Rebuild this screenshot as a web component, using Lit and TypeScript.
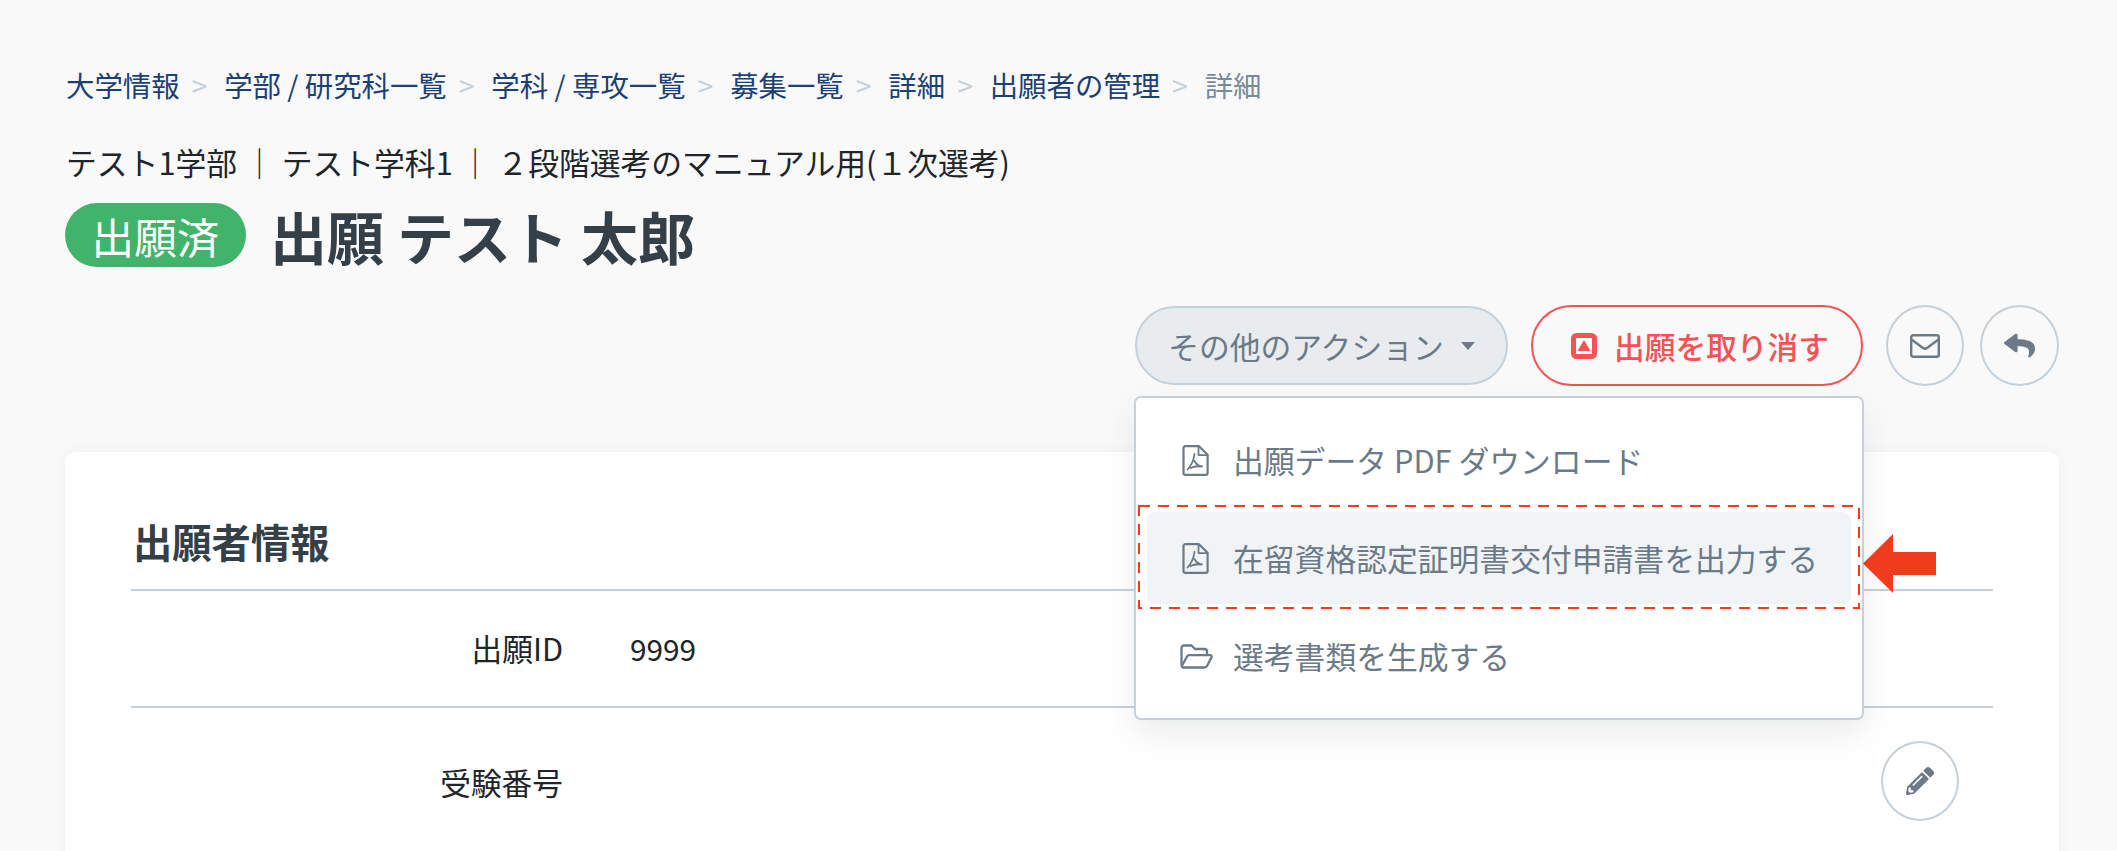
import { LitElement, html, css, svg } from "lit";
import { customElement } from "lit/decorators.js";

const crumbs = ["大学情報", "学部 / 研究科一覧", "学科 / 専攻一覧", "募集一覧", "詳細", "出願者の管理"];

const pdfIcon = svg`
  <svg class="ic-pdf" viewBox="0 0 27 31" fill="none" stroke="currentColor" stroke-width="2.2" stroke-linejoin="round" stroke-linecap="round">
    <path d="M1.5 3a1.8 1.8 0 0 1 1.8-1.8H17l8.600 8.600V28a1.800 1.800 0 0 1-1.800 1.800H3.300A1.800 1.800 0 0 1 1.500 28z"/>
    <path d="M16.500 1.500v8.600h9" stroke-width="1.800"/>
    <path d="M12.500 9c-.6 5-2.800 11-7 15.500M12.500 16c1.500 3 3.500 5 7.500 5.500-4-.5-8.500 0-11.500 1.500" stroke-width="1.800"/>
  </svg>`;

const folderIcon = svg`
  <svg class="ic-folder" viewBox="0 0 33 25" fill="none" stroke="currentColor" stroke-width="2.300" stroke-linejoin="round" stroke-linecap="round">
    <path d="M1.500 21V4a2.500 2.500 0 0 1 2.500-2.500h7.500l3.500 3.500h9.500a2.500 2.500 0 0 1 2.500 2.500V11"/>
    <path d="M1.800 22 7 12.500a2.500 2.500 0 0 1 2.200-1.300h21a1.500 1.500 0 0 1 1.300 2.200L27 22a3 3 0 0 1-2.500 1.500H3a1.500 1.500 0 0 1-1.200-1.500z"/>
  </svg>`;

@customElement("app-root")
export class AppRoot extends LitElement {
  render() {
    return html`
      <nav class="crumbs">
        ${crumbs.map((c) => html`<a>${c}</a><span class="sep">&gt;</span>`)}
        <span class="current">詳細</span>
      </nav>
      <div class="sub">テスト1学部 ｜ テスト学科1 ｜ ２段階選考のマニュアル用(１次選考)</div>
      <div class="title-row">
        <span class="badge">出願済</span>
        <h1>出願 テスト 太郎</h1>
      </div>

      <div class="actions">
        <div class="more-wrap">
          <button class="more">
            その他のアクション<i class="caret"></i>
          </button>
        </div>
        <div class="cancel-wrap">
          <button class="cancel">
            <svg class="ic-cancel" viewBox="0 0 26 26">
              <rect x="2.500" y="2.500" width="21" height="21" rx="3" fill="#fff" stroke="currentColor" stroke-width="5"></rect>
              <path d="M13 7 19.500 18h-13z" fill="currentColor"></path>
            </svg>
            出願を取り消す
          </button>
          <div class="menu">
            <div class="item">${pdfIcon}<span>出願データ PDF ダウンロード</span></div>
            <div class="item active">${pdfIcon}<span>在留資格認定証明書交付申請書を出力する</span></div>
            <div class="item">${folderIcon}<span>選考書類を生成する</span></div>
            <svg class="dashed" viewBox="0 0 722 104">
              <rect x="1" y="1" width="720" height="102" fill="none" stroke="#f03b1c" stroke-width="2" stroke-dasharray="11 8"></rect>
            </svg>
            <svg class="arrow" viewBox="0 0 73 59"><path d="M0 29.500 30 0v18h43v23H30v18z" fill="#f03b1c"></path></svg>
          </div>
        </div>
        <button class="round">
          <svg class="ic-mail" viewBox="0 0 30 24" fill="none" stroke="currentColor" stroke-width="2.400" stroke-linejoin="round" stroke-linecap="round">
            <rect x="1.200" y="1.200" width="27.600" height="21.600" rx="2"></rect>
            <path d="M1.500 5.500 13 14a3.400 3.400 0 0 0 4 0L28.500 5.500"></path>
          </svg>
        </button>
        <button class="round reply">
          <svg class="ic-reply" viewBox="0 0 512 512" preserveAspectRatio="none">
            <path fill="currentColor" d="M8.309 189.836L184.313 37.851C199.719 24.546 224 35.347 224 56.015v80.053c160.629 1.839 288 34.032 288 186.258 0 61.441-39.581 122.309-83.333 154.132-13.653 9.931-33.111-2.533-28.077-18.631 45.344-145.012-21.507-183.51-176.59-185.742V360c0 20.7-24.3 31.453-39.687 18.164l-176.004-152c-11.071-9.562-11.086-26.753 0-36.328z"></path>
          </svg>
        </button>
      </div>

      <section class="card">
        <h2>出願者情報</h2>
        <div class="row">
          <div class="label">出願ID</div>
          <div class="value">9999</div>
        </div>
        <div class="row tall">
          <div class="label">受験番号</div>
          <button class="round edit">
            <svg class="ic-pencil" viewBox="0 0 512 512">
              <path fill="currentColor" d="M497.9 142.1l-46.1 46.1c-4.7 4.7-12.3 4.7-17 0l-111-111c-4.7-4.7-4.7-12.3 0-17l46.1-46.1c18.7-18.7 49.1-18.7 67.9 0l60.1 60.1c18.8 18.7 18.8 49.1 0 67.9zM284.2 99.8L21.6 362.4.4 483.9c-2.9 16.4 11.4 30.6 27.8 27.8l121.5-21.3 262.6-262.6c4.7-4.7 4.7-12.3 0-17l-111-111c-4.8-4.7-12.4-4.7-17.1 0zM124.1 339.9c-5.5-5.5-5.5-14.3 0-19.8l154-154c5.5-5.5 14.3-5.5 19.8 0s5.5 14.3 0 19.8l-154 154c-5.5 5.5-14.3 5.5-19.800 0zM88 424h48v36.300l-64.500 11.300-31.100-31.100L51.700 376H88v48z"></path>
            </svg>
          </button>
        </div>
      </section>
    `;
  }

  static styles = css`
    :host {
      display: block;
      box-sizing: border-box;
      height: 851px;
      overflow: hidden;
      padding: 64px 58px 0 65px;
      background: #f9f9fa;
      font-family: "Noto Sans CJK JP", "Noto Sans", sans-serif;
      font-size: 28.400px;
      color: #212529;
    }

    button {
      font: inherit;
      cursor: pointer;
      background: none;
      padding: 0;
    }

    .crumbs {
      display: flex;
      align-items: center;
      height: 40px;
      padding-left: 1px;
    }
    .crumbs a {
      color: #1c3f74;
    }
    .sep {
      color: #c6d0d9;
      width: 44.600px;
      padding-left: 12px;
      box-sizing: border-box;
    }
    .current {
      color: #7b8a97;
    }

    .sub {
      margin-top: 38px;
      line-height: 40px;
      padding-left: 1px;
      font-size: 30.800px;
      white-space: nowrap;
    }

    .title-row {
      display: flex;
      align-items: center;
      margin-top: 21px;
      height: 64px;
      gap: 24px;
    }
    .badge {
      display: flex;
      align-items: center;
      justify-content: center;
      width: 181px;
      height: 64px;
      border-radius: 32px;
      background: #41b36b;
      color: #fff;
      font-size: 42.600px;
    }
    h1 {
      margin: 0;
      font-size: 57px;
      font-weight: 700;
      line-height: 64px;
      color: #343f47;
    }

    .actions {
      display: flex;
      align-items: center;
      justify-content: flex-end;
      height: 81px;
      margin-top: 38px;
    }
    .more-wrap {
      margin-right: 23px;
    }
    .more {
      display: flex;
      align-items: center;
      justify-content: center;
      gap: 17px;
      width: 373px;
      height: 79px;
      border: 2px solid #c6d0d9;
      border-radius: 40px;
      background: #e9ecef;
      color: #6c7a87;
      font-size: 30.800px;
    }
    .caret {
      width: 0;
      height: 0;
      border-left: 7px solid transparent;
      border-right: 7px solid transparent;
      border-top: 8px solid #6c7a87;
    }

    .cancel-wrap {
      position: relative;
      margin-right: 23px;
    }
    .cancel {
      display: flex;
      align-items: center;
      justify-content: center;
      gap: 17px;
      width: 332px;
      height: 81px;
      padding-left: 6px;
      border: 2px solid #f55353;
      border-radius: 41px;
      color: #f55353;
      font-size: 30.700px;
      font-weight: 500;
    }
    .ic-cancel {
      width: 26px;
      height: 26px;
    }

    .round {
      display: flex;
      align-items: center;
      justify-content: center;
      box-sizing: border-box;
      width: 78px;
      height: 81px;
      border: 2px solid #c6d0d9;
      border-radius: 50%;
      color: #6c7a87;
    }
    .round.reply {
      width: 79px;
      margin-left: 16px;
    }
    .ic-mail {
      width: 30px;
      height: 24px;
    }
    .ic-reply {
      width: 31px;
      height: 27px;
    }
    .ic-pencil {
      width: 28px;
      height: 28px;
    }

    .menu {
      position: absolute;
      top: 91px;
      right: -1px;
      box-sizing: border-box;
      width: 730px;
      height: 324px;
      padding: 16px 11px 0 11px;
      border: 2px solid #c6d0d9;
      border-radius: 7px;
      background: #fff;
      box-shadow: 0 14px 30px rgba(60, 70, 80, 0.1);
      display: flex;
      flex-direction: column;
      gap: 6px;
      color: #6c7a87;
      font-size: 30.800px;
      z-index: 2;
    }
    .item {
      display: flex;
      align-items: center;
      flex: none;
      height: 92px;
      padding-left: 35px;
      border-radius: 8px;
      white-space: nowrap;
    }
    .item span {
      position: absolute;
      left: 97px;
      margin-top: -1px;
    }
    .item.active {
      background: #f1f4f7;
    }
    .ic-pdf {
      width: 27px;
      height: 31px;
    }
    .ic-folder {
      width: 33px;
      height: 25px;
      margin-left: -2px;
    }
    .dashed {
      position: absolute;
      left: 2px;
      top: 107px;
      width: 722px;
      height: 104px;
    }
    .arrow {
      position: absolute;
      left: 727px;
      top: 136px;
      width: 73px;
      height: 59px;
    }

    .card {
      margin-top: 66px;
      height: 500px;
      padding: 61px 66px 0;
      background: #fff;
      border-radius: 10px;
      box-shadow: 0 0 12px rgba(60, 70, 80, 0.05);
    }
    h2 {
      margin: 0;
      padding: 0 0 20px 2px;
      font-size: 39.300px;
      font-weight: 700;
      line-height: 56px;
      color: #343f47;
      border-bottom: 2px solid #c6d0d9;
    }
    .row {
      display: flex;
      align-items: center;
      box-sizing: border-box;
      height: 117px;
      padding-bottom: 2px;
      border-bottom: 2px solid #c6d0d9;
    }
    .row.tall {
      height: auto;
      padding: 33px 34px 0 0;
      border-bottom: none;
    }
    .label {
      width: 432px;
      text-align: right;
      font-size: 30.700px;
    }
    .value {
      margin-left: 67px;
      font-size: 29.800px;
    }
    .edit {
      margin-left: auto;
      width: 78px;
      height: 80px;
    }
  `;
}
